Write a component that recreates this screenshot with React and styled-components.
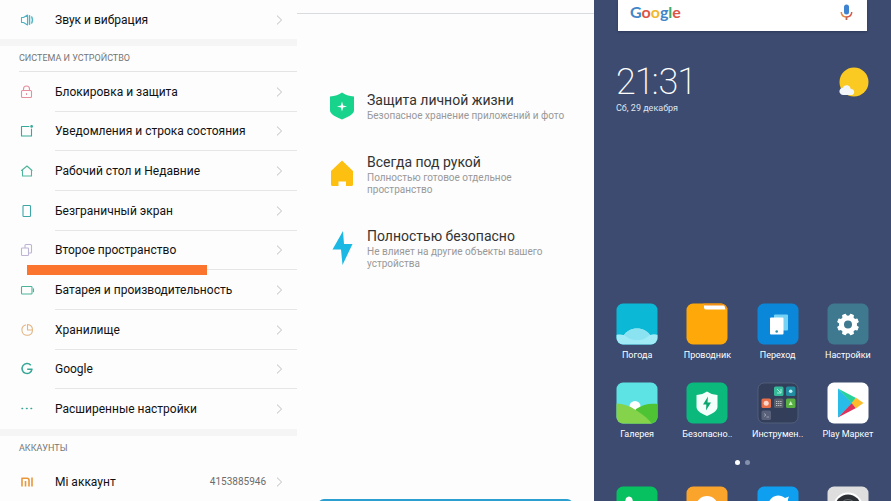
import React from "react";
import styled, { createGlobalStyle } from "styled-components";

const GlobalStyle = createGlobalStyle`
  * { box-sizing: border-box; }
  body { margin: 0; font-family: Roboto, "Noto Sans", sans-serif; background: #fdfdfd; }
  button { border: 0; padding: 0; background: none; font: inherit; color: inherit; cursor: pointer; }
  a { color: inherit; text-decoration: none; }
  h1, h2, h3, p, ul { margin: 0; padding: 0; font-weight: 400; }
  ul { list-style: none; }
  svg { display: block; flex: none; }
`;

const Screens = styled.div`
  display: grid;
  grid-template-columns: repeat(3, minmax(0, 1fr));
  height: 100vh;
  overflow: hidden;
`;

/* ---------- Settings ---------- */

const SettingsScreen = styled.nav`
  display: flex;
  flex-direction: column;
  min-height: 0;
  background: #fdfdfd;
`;

const SectionTitle = styled.h2`
  flex: none;
  margin-left: 19px;
  height: 26px;
  line-height: 25px;
  font-size: 9px;
  color: #757575;
  border-bottom: 1px solid ${(p) => (p.$line ? "#e4e4e4" : "transparent")};
`;

const Band = styled.div`
  flex: none;
  height: 7px;
  background: #f5f5f5;
`;

const RowList = styled.ul`
  display: grid;
  grid-auto-rows: 1fr;
  flex: ${(p) => (p.$grow ? "1" : "none")};
`;

const RowItem = styled.li`
  position: relative;
  display: grid;
  min-height: 39px;
`;

const RowLink = styled.a`
  display: flex;
  align-items: center;
  padding-left: 19px;
  padding-right: 14px;
`;

const RowIcon = styled.span`
  display: flex;
  width: 36px;
`;

const RowLabel = styled.span`
  flex: 1;
  display: flex;
  align-items: center;
  align-self: stretch;
  font-size: 12px;
  color: #111;
  white-space: nowrap;
`;

const RowRule = styled.span`
  position: absolute;
  left: 55px;
  right: 0;
  bottom: 0;
  height: 1px;
  background: #e6e6e6;
`;

const RowValue = styled.span`
  margin-right: 10px;
  font-size: 10px;
  color: #6c6c6c;
`;

const Marker = styled.span`
  position: absolute;
  z-index: 1;
  left: 27px;
  bottom: -5px;
  width: 180px;
  height: 10px;
  background: #fb752e;
`;

const Glyph = ({ color, children }) => (
  <svg width="16" height="16" viewBox="0 0 16 16" fill="none" stroke={color} strokeWidth="1.1" strokeLinecap="round" strokeLinejoin="round" aria-hidden="true">
    {children}
  </svg>
);

const Chevron = () => (
  <svg width="7" height="10" viewBox="0 0 7 10" fill="none" stroke="#bdbdbd" strokeWidth="1" aria-hidden="true">
    <path d="M1 .6 5.6 5 1 9.4" />
  </svg>
);

const icons = {
  sound: (
    <Glyph color="#4fb3c4">
      <path d="M2.500 5.500h2L8.500 3v10l-4-2.500h-2z" />
      <path d="M10.500 3.800v8.400M12.800 5c1 2 1 4 0 6" strokeWidth="1.500" />
    </Glyph>
  ),
  lock: (
    <Glyph color="#e58f9f">
      <rect x="2.500" y="6.500" width="10" height="7" rx="1" />
      <path d="M4.500 6.500V5a3 3 0 0 1 6 0v1.500M7.500 9.500v1" />
    </Glyph>
  ),
  notice: (
    <Glyph color="#35aa9a">
      <path d="M10 3.500H2.500v9.500h10V6" />
      <circle cx="12.600" cy="3.400" r=".8" fill="#35aa9a" />
    </Glyph>
  ),
  home: (
    <Glyph color="#4fb59a">
      <path d="M2.500 7.500 8 3l5 4.500M3.500 7.500v5.500h9V7.500" />
    </Glyph>
  ),
  phone: (
    <Glyph color="#3fa6a6">
      <rect x="4" y="2.500" width="7.500" height="11" rx=".8" />
    </Glyph>
  ),
  copies: (
    <Glyph color="#bdb4d4">
      <rect x="2.500" y="6" width="7" height="7.500" rx=".8" />
      <path d="M6 5.500v-2c0-.6.3-1 1-1h4.500c.7 0 1 .4 1 1V10c0 .6-.4 1-1 1h-1" />
    </Glyph>
  ),
  battery: (
    <Glyph color="#4bb39a">
      <rect x="2.500" y="4.500" width="10.500" height="7.500" rx=".8" />
      <path d="M14.500 6.800v3" />
    </Glyph>
  ),
  storage: (
    <Glyph color="#e3b583">
      <path d="M6.500 3a5.300 5.300 0 1 0 7 5.500" />
      <path d="M8.500 2.500V8h5c0-3-2-5.300-5-5.500z" />
    </Glyph>
  ),
  google: (
    <Glyph color="#36a796">
      <path strokeWidth="1.500" strokeLinecap="butt" d="M11.800 4.200A5 5 0 1 0 13 8.200H8.200" />
    </Glyph>
  ),
  more: (
    <Glyph color="#36a796">
      <path strokeWidth="1.500" d="M3 7.500h.6M7.500 7.500h.6M12 7.500h.6" />
    </Glyph>
  ),
  mi: (
    <Glyph color="#e8973a">
      <path strokeWidth="1.600" strokeLinecap="butt" d="M3 12.500V4.300h5c1.300 0 2 .7 2 2v6.200M6.500 7v5.500M13 3.500v9" />
    </Glyph>
  ),
};

const deviceRows = [
  { icon: "lock", label: "Блокировка и защита" },
  { icon: "notice", label: "Уведомления и строка состояния" },
  { icon: "home", label: "Рабочий стол и Недавние" },
  { icon: "phone", label: "Безграничный экран" },
  { icon: "copies", label: "Второе пространство", marked: true },
  { icon: "battery", label: "Батарея и производительность" },
  { icon: "storage", label: "Хранилище" },
  { icon: "google", label: "Google" },
  { icon: "more", label: "Расширенные настройки" },
];

const SettingsRow = ({ icon, label, value, marked, rule }) => (
  <RowItem>
    <RowLink href="#">
      <RowIcon>{icons[icon]}</RowIcon>
      <RowLabel>{label}</RowLabel>
      {value && <RowValue>{value}</RowValue>}
      <Chevron />
    </RowLink>
    {rule && <RowRule />}
    {marked && <Marker />}
  </RowItem>
);

/* ---------- Second space introduction ---------- */

const IntroScreen = styled.main`
  display: flex;
  flex-direction: column;
  min-height: 0;
  background: #fdfdfd;
`;

const IntroBar = styled.header`
  flex: none;
  height: 14px;
  border-bottom: 1px solid #d9dcde;
`;

const Features = styled.ul`
  flex: 1;
  display: flex;
  flex-direction: column;
  gap: 30px;
  padding: 76px 16px 0 32px;
`;

const Feature = styled.li`
  display: flex;
  align-items: center;
  gap: 12px;
`;

const FeatureTitle = styled.h3`
  font-size: 14px;
  line-height: 20px;
  color: #333;
`;

const FeatureText = styled.p`
  max-width: 200px;
  font-size: 10px;
  line-height: 12px;
  color: #999;
`;

const StartButton = styled.button`
  flex: none;
  height: 34px;
  margin: 0 21px -32px;
  border-radius: 6px;
  background: #2a9fd0;
`;

const FeatureIcon = ({ children }) => (
  <svg width="26" height="36" viewBox="0 0 26 36" aria-hidden="true">{children}</svg>
);

const features = [
  {
    title: "Защита личной жизни",
    text: "Безопасное хранение приложений и фото",
    art: (
      <svg width="26" height="28" viewBox="0 0 26 28" aria-hidden="true">
        <path d="M13 .5c3 2.200 7 3.600 12 4v14c0 3.500-6 6.500-12 9C7 25 1 22 1 18.500v-14c5-.4 9-1.800 12-4z" fill="#17d38c" />
        <path d="M13 9.500l1.100 3.900 3.900 1.100-3.900 1.100L13 19.500l-1.100-3.900L8 14.500l3.900-1.100z" fill="#fff" />
      </svg>
    ),
  },
  {
    title: "Всегда под рукой",
    text: "Полностью готовое отдельное пространство",
    art: (
      <FeatureIcon>
        <path d="M13 4.500 24 15v13.500q0 1.500-1.500 1.500H17v-4.500H9.500V30h-6Q2 30 2 28.500V15z" fill="#fdc011" />
      </FeatureIcon>
    ),
  },
  {
    title: "Полностью безопасно",
    text: "Не влияет на другие объекты вашего устройства",
    art: (
      <FeatureIcon>
        <path d="M14 1 3.500 19.500H12L13.500 35 23.500 14H15z" fill="#1cb8e4" />
      </FeatureIcon>
    ),
  },
];

/* ---------- Home screen ---------- */

const HomeScreen = styled.section`
  display: flex;
  flex-direction: column;
  min-height: 0;
  background: #3c4b6f;
  color: #fff;
`;

const SearchBar = styled.form`
  flex: none;
  display: flex;
  align-items: center;
  height: 31px;
  margin: 0 24px;
  padding: 0 14px 7px 12px;
  background: #fff;
  box-shadow: 0 1px 2px #2c395a;
`;

const Logo = styled.label`
  font-family: Lato, sans-serif;
  font-weight: 700;
  font-size: 16px;
  line-height: 24px;
`;

const Letter = styled.span`
  color: ${(p) => p.$color};
`;

const SearchInput = styled.input`
  flex: 1;
  min-width: 0;
  height: 24px;
  border: 0;
  outline: 0;
  background: transparent;
`;

const Widget = styled.div`
  flex: none;
  display: flex;
  justify-content: space-between;
  padding: 29px 22px 0 22px;
  height: 272px;
`;

const Clock = styled.time`
  display: block;
  padding-top: 2px;
  font-family: Roboto, sans-serif;
  font-weight: 200;
  font-variant-numeric: proportional-nums;
  font-size: 36px;
  line-height: 40px;
`;

const DateLine = styled.p`
  font-size: 9px;
  line-height: 12px;
  color: #dfe4ee;
`;

const WeatherIcon = styled.div`
  padding-top: 6px;
`;

const AppGrid = styled.div`
  flex: none;
  display: grid;
  grid-template-columns: repeat(4, minmax(0, 1fr));
  row-gap: 21px;
  padding: 0 8px;
`;

const AppButton = styled.button`
  display: flex;
  flex-direction: column;
  align-items: center;
  gap: 4px;
  font-size: 9px;
  line-height: 12px;
  white-space: nowrap;
`;

const Dots = styled.div`
  flex: none;
  display: flex;
  justify-content: center;
  gap: 5px;
  padding: 20px 0 21px;
`;

const Dot = styled.span`
  width: 5px;
  height: 5px;
  border-radius: 50%;
  background: ${(p) => (p.$active ? "#fff" : "#8490ac")};
`;

const Tile = ({ id, fill, children }) => (
  <svg width="42" height="42" viewBox="0 0 42 42" aria-hidden="true">
    <clipPath id={id}><rect x=".5" y=".5" width="41" height="41" rx="6.500" /></clipPath>
    <g clipPath={`url(#${id})`}>
      <rect width="42" height="42" fill={fill} />
      {children}
    </g>
  </svg>
);

const gearTeeth = [0, 45, 90, 135, 180, 225, 270, 315];

const apps = [
  {
    label: "Погода",
    art: (
      <Tile id="weather" fill="#0bb8d6">
        <path d="M0 32c4-1 6 0 8 0 3-4 7-6.500 13-6.500S31 28 34 32c3-1 5-1 8 0v10H0z" fill="#a0ebf6" />
        <path d="M8 32c3-4 7-6.500 13-6.500S31 28 34 32c-5 4-7 5-13 5s-9-2-13-5z" fill="#8be3f2" />
      </Tile>
    ),
  },
  {
    label: "Проводник",
    art: (
      <Tile id="files" fill="#fea809">
        <path d="M17 0h25v6H22z" fill="#f29317" />
        <path d="M18 2.500h19.500q1.500 0 1.800 4H20q-1.500 0-2-1.500z" fill="#fff" />
      </Tile>
    ),
  },
  {
    label: "Переход",
    art: (
      <Tile id="mover" fill="#0b87da">
        <rect x="17" y="11.500" width="14" height="16" rx="1" fill="#75d2f5" />
        <rect x="13" y="14.500" width="13.500" height="17" rx="1" fill="#fff" />
        <circle cx="19.700" cy="28.500" r="1.300" fill="#2e93a8" />
      </Tile>
    ),
  },
  {
    label: "Настройки",
    art: (
      <Tile id="settings" fill="#3f7990">
        {gearTeeth.map((angle) => (
          <path key={angle} d="M18.900 14 19.500 11h3l.6 3z" fill="#fff" stroke="#fff" strokeLinejoin="round" transform={`rotate(${angle + 22.5} 21 21.500)`} />
        ))}
        <circle cx="21" cy="21.500" r="6.500" fill="none" stroke="#fff" strokeWidth="5" />
      </Tile>
    ),
  },
  {
    label: "Галерея",
    art: (
      <Tile id="gallery" fill="#5ee3e4">
        <circle cx="19" cy="24.500" r="5.500" fill="#fff" />
        <path d="M20 27c7-5 14-6 22-5v20H14z" fill="#4ec434" />
        <path d="M0 21.500C9 22 16 25 22 29.500c6 4 11 8 14 12.500H0z" fill="#85d34b" />
      </Tile>
    ),
  },
  {
    label: "Безопасно..",
    art: (
      <Tile id="security" fill="#0bb97d">
        <path d="M21 9.500c3 2 6 3.200 10.500 3.500v12c0 3.500-4.500 6.500-10.500 9-6-2.500-10.500-5.500-10.500-9V13c4.500-.3 7.500-1.500 10.500-3.500z" fill="#f3fffa" />
        <path d="M22 14.500 17 22.500h3.300L20 28.500l5-8h-3.500z" fill="#0aa870" />
      </Tile>
    ),
  },
  {
    label: "Инструмен..",
    art: (
      <svg width="42" height="42" viewBox="0 0 42 42" aria-hidden="true">
        <rect x="1" y="1" width="40" height="40" rx="6" fill="#333e5b" stroke="#59647f" strokeWidth=".8" />
        <rect x="17" y="4.500" width="9.500" height="9.500" rx="1.500" fill="#35b998" />
        <path d="m20 7 4 4m0-4v4h-4" stroke="#a6ecd9" fill="none" />
        <rect x="29" y="4.500" width="9.500" height="9.500" rx="1.500" fill="#218b9f" />
        <circle cx="33.700" cy="9.200" r="1.800" fill="#bdeff5" />
        <rect x="4.500" y="16.500" width="9.500" height="9.500" rx="1.500" fill="#e76f49" />
        <circle cx="9.200" cy="21.200" r="2.500" fill="#fbd8cb" />
        <rect x="17" y="16.500" width="9.500" height="9.500" rx="1.500" fill="#59606c" />
        <path d="M19 19.500h5.500M19 21.500h5.500M19 23.500h5.500" stroke="#bfc2c8" strokeDasharray="1.300 .8" />
        <rect x="29" y="16.500" width="9.500" height="9.500" rx="1.500" fill="#58b043" />
        <path d="m33.700 19 2 4h-4z" fill="#cdf3be" />
        <rect x="4.500" y="28.500" width="9.500" height="9.500" rx="1.500" fill="#59617a" />
        <path d="m7 31.500 2 1.500-2 1.500M9.500 35h2.500" stroke="#a9afbd" fill="none" strokeWidth=".8" />
      </svg>
    ),
  },
  {
    label: "Play Маркет",
    art: (
      <Tile id="play" fill="#fff">
        <path d="M11 6.500v29L25.500 21z" fill="#28bce8" />
        <path d="M11 6.500 29 16l-4 5.200z" fill="#28d19a" />
        <path d="M11 35.500 29 26l-4-5z" fill="#df315a" />
        <path d="m29 15.800 7.500 5.200-7.500 5.200-4.500-5.200z" fill="#fcbc2c" />
      </Tile>
    ),
  },
];

const dock = [
  {
    label: "Телефон",
    art: (
      <Tile id="dial" fill="#07c160">
        <path d="M10 12q3-3 6 0l1.500 5-3 3c1.500 4 4 6 7 7l3-3 5 2q2 4-2 6c-12 2-21-9-17.500-20z" fill="#fff" />
      </Tile>
    ),
  },
  {
    label: "Контакты",
    art: (
      <Tile id="chat" fill="#fba42c">
        <circle cx="21" cy="21" r="11" fill="#fff" />
      </Tile>
    ),
  },
  {
    label: "Браузер",
    art: (
      <Tile id="browser" fill="#0f9ff0">
        <path d="M10 22c1-7 5-12.500 11-12.500 3 0 5 1 7 2.500l4-1.500c-1 2-1.500 4-1 6 2 9-3 15-10 15s-11-4-11-9.500z" fill="#fff" />
      </Tile>
    ),
  },
  {
    label: "Камера",
    art: (
      <Tile id="camera" fill="#dedede">
        <circle cx="21" cy="21.500" r="15" fill="#fff" />
        <circle cx="21" cy="21.500" r="13" fill="#2c3034" />
        <circle cx="21" cy="21.500" r="8" fill="none" stroke="#656b70" />
      </Tile>
    ),
  },
];

const logoLetters = [
  ["G", "#4285c8"],
  ["o", "#dc5548"],
  ["o", "#f0b92d"],
  ["g", "#4285c8"],
  ["l", "#40a866"],
  ["e", "#dc5548"],
];

export default function App() {
  return (
    <>
      <GlobalStyle />
      <Screens>
        <SettingsScreen aria-label="Настройки">
          <RowList>
            <SettingsRow icon="sound" label="Звук и вибрация" />
          </RowList>
          <Band />
          <SectionTitle $line>СИСТЕМА И УСТРОЙСТВО</SectionTitle>
          <RowList $grow>
            {deviceRows.map((row, i) => (
              <SettingsRow key={row.label} {...row} rule={i < deviceRows.length - 1} />
            ))}
          </RowList>
          <Band />
          <SectionTitle>АККАУНТЫ</SectionTitle>
          <RowList>
            <SettingsRow icon="mi" label="Mi аккаунт" value="4153885946" />
          </RowList>
        </SettingsScreen>

        <IntroScreen>
          <IntroBar />
          <Features>
            {features.map((f) => (
              <Feature key={f.title}>
                {f.art}
                <div>
                  <FeatureTitle>{f.title}</FeatureTitle>
                  <FeatureText>{f.text}</FeatureText>
                </div>
              </Feature>
            ))}
          </Features>
          <StartButton type="button" aria-label="Включить" />
        </IntroScreen>

        <HomeScreen>
          <SearchBar>
            <Logo htmlFor="search">
              {logoLetters.map(([letter, color], i) => (
                <Letter key={i} $color={color}>{letter}</Letter>
              ))}
            </Logo>
            <SearchInput id="search" type="text" />
            <button type="button" aria-label="Голосовой поиск">
              <svg width="13" height="17" viewBox="0 0 13 17" fill="none" aria-hidden="true">
                <rect x="4" y=".5" width="5" height="10" rx="2.500" fill="#3f83d0" />
                <path d="M1.300 8c0 3 2.200 4.900 5.200 4.900" stroke="#e9823a" strokeWidth="1.500" />
                <path d="M6.500 12.900c3 0 5.200-1.900 5.200-4.900" stroke="#dc5548" strokeWidth="1.500" />
                <path d="M6.500 12.500V16" stroke="#c0694e" strokeWidth="1.800" />
              </svg>
            </button>
          </SearchBar>
          <Widget>
            <div>
              <Clock>21:31</Clock>
              <DateLine>Сб, 29 декабря</DateLine>
            </div>
            <WeatherIcon>
              <svg width="30" height="31" viewBox="0 0 30 31" role="img" aria-label="Переменная облачность">
                <circle cx="15" cy="16" r="14.500" fill="#fbca22" />
                <path d="M4 29a3.600 3.600 0 0 1-3-5.500c.5-1 1.500-1.500 2.500-1.500 1-3 5.500-4 7.500-1 .5 1 .7 1.500.7 2 3 0 3.800 1.800 3.300 4-.4 1.500-1.500 2-3 2z" fill="#f2f5fa" />
              </svg>
            </WeatherIcon>
          </Widget>
          <AppGrid>
            {apps.map((app) => (
              <AppButton key={app.label} type="button">
                {app.art}
                {app.label}
              </AppButton>
            ))}
          </AppGrid>
          <Dots>
            <Dot $active />
            <Dot />
          </Dots>
          <AppGrid>
            {dock.map((app) => (
              <AppButton key={app.label} type="button" aria-label={app.label}>
                {app.art}
              </AppButton>
            ))}
          </AppGrid>
        </HomeScreen>
      </Screens>
    </>
  );
}
